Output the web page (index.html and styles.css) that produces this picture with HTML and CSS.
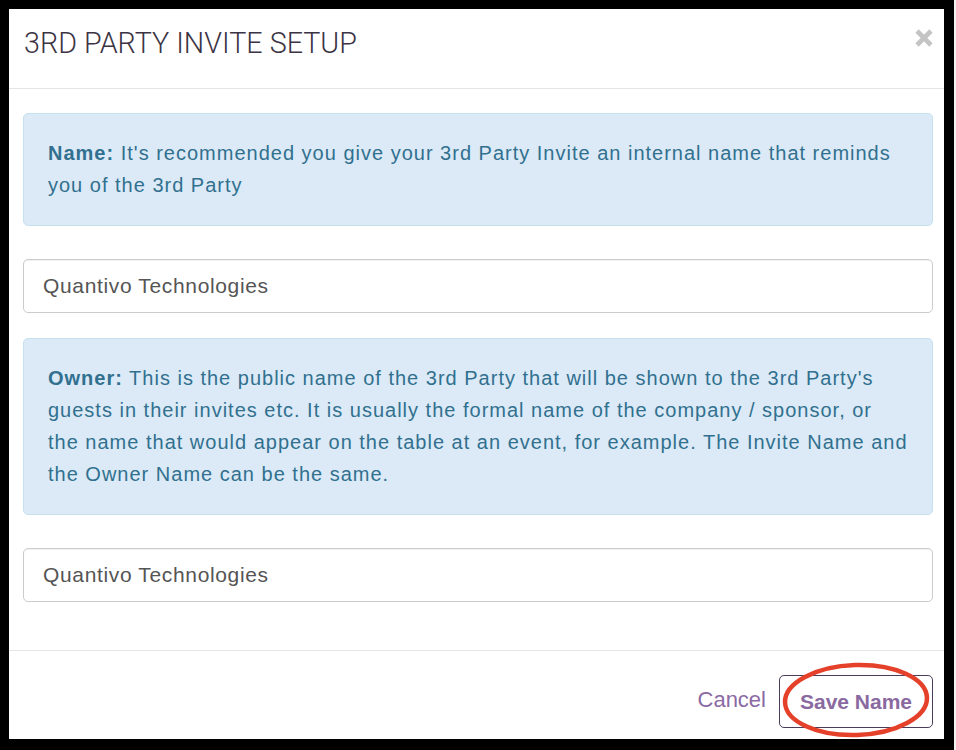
FILE: index.html
```html
<!DOCTYPE html>
<html lang="en">
<head>
<meta charset="utf-8">
<title>3rd Party Invite Setup</title>
<link rel="stylesheet" href="styles.css">
</head>
<body>
<div class="modal">
  <div class="modal-header">
    <h4 class="modal-title">3RD PARTY INVITE SETUP</h4>
    <button class="close" type="button" aria-label="Close">
      <svg width="18" height="18" viewBox="0 0 18 18"><path d="M2 2 L16 16 M16 2 L2 16" stroke="#c4c4c4" stroke-width="4.6" fill="none"/></svg>
    </button>
  </div>
  <div class="modal-body">
    <div class="alert"><strong>Name:</strong> It's recommended you give your 3rd Party Invite an internal name that reminds you of the 3rd Party</div>
    <input class="form-control" type="text" value="Quantivo Technologies">
    <div class="alert second"><strong>Owner:</strong> This is the public name of the 3rd Party that will be shown to the 3rd Party's guests in their invites etc. It is usually the formal name of the company / sponsor, or the name that would appear on the table at an event, for example. The Invite Name and the Owner Name can be the same.</div>
    <input class="form-control" type="text" value="Quantivo Technologies">
  </div>
  <div class="modal-footer">
    <button class="btn-link" type="button">Cancel</button>
    <button class="btn-save" type="button">Save Name</button>
    <svg class="annotation" width="160" height="84" viewBox="0 0 160 84"><ellipse cx="80" cy="42" rx="71" ry="35" transform="rotate(-2 80 42)" fill="none" stroke="#e4402a" stroke-width="4.5"/></svg>
  </div>
</div>
</body>
</html>
```
FILE: styles.css
```css
html, body {
  margin: 0;
  padding: 0;
}
body {
  background: linear-gradient(to right, #000 954px, #f2f2f2 954px);
  width: 956px;
  height: 750px;
  overflow: hidden;
  font-family: "Liberation Sans", Arial, sans-serif;
}
.modal {
  margin: 9px 0 0 9px;
  width: 935px;
  height: 730px;
  background: #fff;
  display: flex;
  flex-direction: column;
}
.modal-header {
  display: flex;
  align-items: flex-start;
  justify-content: space-between;
  padding: 17px 11px 28px 15px;
  border-bottom: 1px solid #e5e5e5;
}
.modal-title {
  margin: 0;
  font-family: Roboto, "Liberation Sans", sans-serif;
  font-weight: 300;
  font-size: 28.7px;
  line-height: 34px;
  color: #3c3444;
}
.close {
  border: 0;
  background: none;
  padding: 0;
  margin-top: 3px;
  width: 18px;
  height: 18px;
  display: block;
}
.close svg { display: block; }
.modal-body {
  padding: 24px 11px 48px 14px;
  display: flex;
  flex-direction: column;
}
.alert {
  background: #dbeaf6;
  border: 1px solid #c6e1ee;
  border-radius: 5px;
  color: #31708f;
  font-size: 20px;
  letter-spacing: 1px;
  line-height: 31.7px;
  padding: 24px;
  margin-bottom: 33px;
}
.alert strong { font-weight: 700; letter-spacing: 1px; }
.alert.second { margin-top: 25px; }
.form-control {
  box-sizing: border-box;
  height: 54px;
  width: 100%;
  margin: 0;
  border: 1px solid #cccccc;
  border-radius: 5px;
  padding: 0 19px;
  font-family: "Liberation Sans", Arial, sans-serif;
  font-size: 21px;
  letter-spacing: 0.65px;
  color: #555555;
  background: #fff;
  box-shadow: inset 0 1px 1px rgba(0,0,0,0.06);
}
.modal-footer {
  position: relative;
  flex: 1;
  border-top: 1px solid #e5e5e5;
  display: flex;
  justify-content: flex-end;
  align-items: flex-start;
  padding: 24px 11px 0 0;
}
.btn-link {
  border: 0;
  background: none;
  font-family: "Liberation Sans", Arial, sans-serif;
  font-size: 22px;
  color: #8b6aa4;
  padding: 0;
  height: 49px;
  margin-right: 13px;
}
.btn-save {
  box-sizing: border-box;
  width: 154px;
  height: 53px;
  border: 1px solid #4b3d5a;
  border-radius: 5px;
  background: #fff;
  font-family: "Liberation Sans", Arial, sans-serif;
  font-weight: 700;
  font-size: 21px;
  color: #8a68a0;
  padding: 0;
}
.annotation {
  position: absolute;
  left: 767px;
  top: 7px;
}
```
